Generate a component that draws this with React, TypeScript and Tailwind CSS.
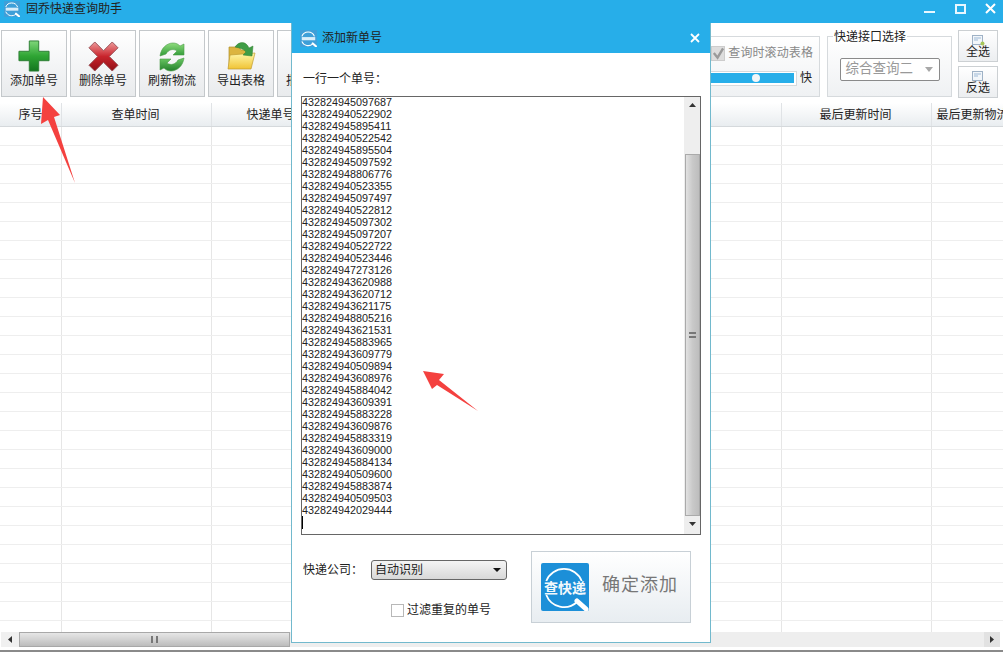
const numbers = `432824945097687
432824940522902
432824945895411
432824940522542
432824945895504
432824945097592
432824948806776
432824940523355
432824945097497
432824940522812
432824945097302
432824945097207
432824940522722
432824940523446
432824947273126
432824943620988
432824943620712
432824943621175
432824948805216
432824943621531
432824945883965
432824943609779
432824940509894
432824943608976
432824945884042
432824943609391
432824945883228
432824943609876
432824945883319
432824943609000
432824945884134
432824940509600
432824945883874
432824940509503
432824942029444`.split("\n");

function PlusIcon() {
  return (
    <svg width="32" height="32" viewBox="0 0 34 34">
      <defs>
        <linearGradient id="plusFill" x1="0" y1="0" x2="0" y2="1">
          <stop offset="0" stopColor="#7fd67a" />
          <stop offset="0.5" stopColor="#2fa534" />
          <stop offset="1" stopColor="#14761f" />
        </linearGradient>
      </defs>
      <path d="M12 1h10v11h11v10H22v11H12V22H1V12h11z" fill="url(#plusFill)" stroke="#2c7d33" strokeWidth="1" />
    </svg>
  );
}

function CrossIcon() {
  return (
    <svg width="31" height="31" viewBox="0 0 32 32">
      <defs>
        <linearGradient id="crossFill" x1="0" y1="0" x2="0" y2="1">
          <stop offset="0" stopColor="#ee9a9a" />
          <stop offset="0.5" stopColor="#c8242c" />
          <stop offset="1" stopColor="#8f0f16" />
        </linearGradient>
      </defs>
      <path d="M7 1l9 9 9-9 6 6-9 9 9 9-6 6-9-9-9 9-6-6 9-9-9-9z" fill="url(#crossFill)" stroke="#9a555a" strokeWidth="1" />
    </svg>
  );
}

function RefreshIcon() {
  return (
    <svg width="28" height="30" viewBox="0 0 28 30">
      <defs>
        <linearGradient id="refreshTop" x1="0" y1="0" x2="0" y2="1">
          <stop offset="0" stopColor="#8fdc7e" />
          <stop offset="1" stopColor="#2f9a36" />
        </linearGradient>
        <linearGradient id="refreshBottom" x1="0" y1="0" x2="0" y2="1">
          <stop offset="0" stopColor="#6cc964" />
          <stop offset="1" stopColor="#23802c" />
        </linearGradient>
      </defs>
      <path d="M2 14C3 6 9 1 15 1c3 0 5 1 7 3l4-2v11H15l4-4c-4-3-9-1-11 3z" fill="url(#refreshTop)" stroke="#4a9a47" strokeWidth="0.6" />
      <path d="M26 16c-1 8-7 13-13 13-3 0-5-1-7-3l-4 2V17h11l-4 4c4 3 9 1 11-3z" fill="url(#refreshBottom)" stroke="#4a9a47" strokeWidth="0.6" />
    </svg>
  );
}

function FolderIcon() {
  return (
    <svg width="30" height="30" viewBox="0 0 30 30" className="mb-px">
      <defs>
        <linearGradient id="folderFront" x1="0" y1="0" x2="0" y2="1">
          <stop offset="0" stopColor="#fff7a8" />
          <stop offset="1" stopColor="#f0c334" />
        </linearGradient>
      </defs>
      <path d="M3 6h10l2 3h9v18H3z" fill="#dcb540" stroke="#b08f2c" strokeWidth="0.7" />
      <path d="M4 14l25-2-4 16H2z" fill="url(#folderFront)" stroke="#c09c30" strokeWidth="0.7" />
      <path d="M9 6c4-6 11-6 14 1l4-2-1 10-9-1 3-3c-2-3-6-4-11-5z" fill="#3f9c46" stroke="#2f7f2c" strokeWidth="0.5" />
    </svg>
  );
}

function LogoMark({ size }: { size: number }) {
  const large = size > 30;
  return (
    <svg width={size} height={size} viewBox="0 0 48 48">
      <rect width="48" height="48" rx="2" fill={large ? "#1c8fd8" : "#3f9fd8"} />
      <path d="M5.3 18A19 19 0 0 1 40.7 18" fill="none" stroke="#fff" strokeWidth={large ? 1.8 : 3} />
      <path d="M5.3 32A19 19 0 0 0 36 39" fill="none" stroke="#fff" strokeWidth={large ? 1.8 : 3} />
      <path d="M36 38l9 8" stroke="#fff" strokeWidth={large ? 5 : 6} strokeLinecap="round" />
      {large ? (
        <text x="24" y="30" textAnchor="middle" fontSize="14" fontWeight="700" fill="#f2f8fc">
          查快递
        </text>
      ) : (
        <rect x="5" y="20" width="38" height="9" fill="#dbeefa" />
      )}
    </svg>
  );
}

function ToolButton({ label, icon }: { label: string; icon: React.ReactNode }) {
  return (
    <div className="flex h-[67px] w-[66px] flex-col items-center whitespace-nowrap border border-[#c4c8cb] bg-gradient-to-b from-white to-[#e9ebed]">
      <div className="flex h-[41px] shrink-0 items-end justify-center">{icon}</div>
      <span className="mt-[1px] leading-[16px]">{label}</span>
    </div>
  );
}

function SmallSelectButton({ label, accent }: { label: string; accent?: boolean }) {
  return (
    <div className="flex h-[32px] w-[40px] flex-col items-center border border-[#ccd0d3] bg-gradient-to-b from-white to-[#eceef0]">
      <svg width="13" height="11" viewBox="0 0 13 11" className="mt-[4px]">
        <rect x="0.5" y="0.5" width="10" height="9" fill="#f2f6fa" stroke="#9fb2c6" />
        <path d="M2 3h7M2 5h4" stroke="#9db9d6" />
        {accent ? <circle cx="10.5" cy="8.5" r="2" fill="#a6c65a" /> : null}
      </svg>
      <span className="mt-[-1px] leading-[15px]">{label}</span>
    </div>
  );
}

function TableRow({ header, cells }: { header?: boolean; cells: string[] }) {
  return (
    <div className={`grid grid-cols-[62px_150px_120px_450px_150px_84px] ${header ? "h-[24px] border-b border-[#d5d9dc] bg-gradient-to-b from-white to-[#e9edf0]" : "h-[19px] border-b border-[#eeeeee]"}`}>
      {cells.map((cell, i) => (
        <div key={i} className={`flex items-center justify-center whitespace-nowrap border-r ${i > 0 ? "pr-[2px]" : ""} ${header ? "border-[#e0e3e6]" : "border-[#e6e6e6]"}`}>
          {cell}
        </div>
      ))}
    </div>
  );
}

function AddDialog() {
  return (
    <div className="absolute left-[291px] top-[23px] flex h-[620px] w-[420px] flex-col border border-t-0 border-[#72b9cd] bg-white">
      <div className="flex h-[30px] shrink-0 items-center bg-[#27aee9] pl-[8px] pr-[10px]">
        <LogoMark size={17} />
        <span className="ml-[5px]">添加新单号</span>
        <svg width="10" height="10" viewBox="0 0 10 10" className="ml-auto">
          <path d="M1 1l8 8M9 1l-8 8" stroke="#fff" strokeWidth="1.8" />
        </svg>
      </div>
      <div className="flex flex-1 flex-col px-[9px]">
        <div className="ml-[2px] mt-[18px] h-[25px] leading-[16px]">一行一个单号：</div>
        <div className="flex h-[439px] border border-[#666666]">
          <div className="flex-1 overflow-hidden font-['Liberation_Sans',sans-serif] text-[10.8px] leading-[12px] text-[#222]">
            <div className="mt-[-1px]">
              {numbers.map((n) => (
                <div key={n}>{n}</div>
              ))}
              <div className="h-[13px] w-px bg-black" />
            </div>
          </div>
          <div className="flex w-[16px] flex-col items-center bg-[#eeeeee]">
            <svg width="7" height="4" viewBox="0 0 7 4" className="mt-[6px]"><path d="M3.5 0L7 4H0z" fill="#333" /></svg>
            <div className="mt-[47px] flex h-[362px] w-[15px] items-center justify-center border border-[#aaaaaa] bg-gradient-to-r from-[#e2e2e2] via-[#c9c9c9] to-[#bdbdbd]">
              <div className="h-[6px] w-[7px] border-y-2 border-[#777]" />
            </div>
            <svg width="7" height="4" viewBox="0 0 7 4" className="mt-[6px]"><path d="M0 0h7L3.5 4z" fill="#333" /></svg>
          </div>
        </div>
        <div className="mt-[16px] flex">
          <div className="w-[230px]">
            <div className="mt-[9px] flex items-center">
              <span className="ml-[2px] w-[68px]">快递公司：</span>
              <div className="flex h-[20px] w-[136px] items-center justify-between rounded-[3px] border border-[#666666] bg-gradient-to-b from-[#f4f4f4] to-[#d8d8d8] pl-[3px] pr-[5px]">
                <span>自动识别</span>
                <svg width="8" height="4" viewBox="0 0 8 4"><path d="M0 0h8L4 4z" fill="#111" /></svg>
              </div>
            </div>
            <div className="ml-[90px] mt-[21px] flex items-center">
              <div className="h-[13px] w-[13px] border border-[#b8b8b8] bg-white" />
              <span className="ml-[3px]">过滤重复的单号</span>
            </div>
          </div>
          <div className="flex h-[72px] w-[160px] items-center border border-[#c8d0d6] bg-gradient-to-b from-white to-[#e8edf1] pl-[9px]">
            <LogoMark size={48} />
            <span className="mb-[4px] ml-[13px] font-['Liberation_Serif','Noto_Sans_CJK_SC',serif] text-[18px] leading-none tracking-[1px] text-[#777777]">确定添加</span>
          </div>
        </div>
      </div>
    </div>
  );
}

export default function App() {
  return (
    <div className="relative flex h-[652px] w-[1003px] flex-col overflow-hidden bg-white font-['Liberation_Sans','Noto_Sans_CJK_SC',sans-serif] text-[12px] text-[#222]">
      <div className="flex h-[23px] shrink-0 items-center bg-[#27aee9] pb-[6px] pl-[4px]">
        <LogoMark size={16} />
        <span className="ml-[6px]">固乔快递查询助手</span>
        <div className="ml-auto flex items-center">
          <svg width="11" height="11" viewBox="0 0 11 11"><path d="M0 9h11" stroke="#e8f7ff" strokeWidth="2" /></svg>
          <svg width="11" height="10" viewBox="0 0 11 10" className="ml-[20px]"><rect x="1" y="1" width="9" height="8" fill="none" stroke="#e8f7ff" strokeWidth="2" /></svg>
          <svg width="11" height="11" viewBox="0 0 11 11" className="ml-[19px] mr-[7px]"><path d="M1 1l9 9M10 1l-9 9" stroke="#fff" strokeWidth="2" /></svg>
        </div>
      </div>

      <div className="flex h-[80px] shrink-0 pl-[1px] pt-[7px]">
        <div className="flex gap-[3px]">
          <ToolButton label="添加单号" icon={<PlusIcon />} />
          <ToolButton label="删除单号" icon={<CrossIcon />} />
          <ToolButton label="刷新物流" icon={<RefreshIcon />} />
          <ToolButton label="导出表格" icon={<FolderIcon />} />
          <ToolButton label="批量查询" icon={null} />
        </div>
        <div className="ml-auto flex pr-[5px]">
          <div className="mt-[6px] flex h-[61px] w-[180px] flex-col items-end border border-[#d6dadd] bg-gradient-to-b from-white to-[#eff1f3] pr-[6px]">
            <div className="mt-[7px] flex items-center text-[#888888]">
              <div className="mr-[3px] flex h-[15px] w-[14px] items-center justify-center border border-[#cccccc] bg-[#dddddd]">
                <svg width="13" height="13" viewBox="0 0 13 13"><path d="M2 6l4 5 6-10" fill="none" stroke="#9a9a9a" strokeWidth="2.6" /></svg>
              </div>
              <span className="tracking-[0.1px]">查询时滚动表格</span>
            </div>
            <div className="mt-[7px] flex items-center">
              <div className="flex h-[15px] w-[120px] items-center border border-[#d6dadd] bg-white pr-[2px]">
                <div className="relative h-[10px] flex-1 bg-[#27aee9]">
                  <div className="absolute left-[74px] top-[1px] h-[8px] w-[8px] rounded-full bg-[#f2f6f8]" />
                </div>
              </div>
              <span className="ml-[3px] mr-[1px]">快</span>
            </div>
          </div>
          <div className="relative ml-[7px] mt-[6px] flex h-[61px] w-[125px] items-center justify-center border border-[#d6dadd] bg-gradient-to-b from-white to-[#eff1f3]">
            <span className="absolute left-[5px] top-[-7px] bg-white px-[1px] leading-[14px]">快递接口选择</span>
            <div className="mt-[5px] flex h-[23px] w-[100px] items-center justify-between rounded-[2px] border border-[#8a8a8a] bg-white pl-[5px] pr-[6px] text-[13.5px] text-[#999999]">
              <span>综合查询二</span>
              <svg width="8" height="5" viewBox="0 0 8 5"><path d="M0 0h8L4 5z" fill="#a8a8a8" /></svg>
            </div>
          </div>
          <div className="ml-[6px] flex flex-col gap-[4px]">
            <SmallSelectButton label="全选" accent />
            <SmallSelectButton label="反选" />
          </div>
        </div>
      </div>

      <div className="flex-1 overflow-hidden">
        <TableRow header cells={["序号", "查单时间", "快递单号", "", "最后更新时间", "最后更新物流"]} />
        {Array.from({ length: 27 }, (_, i) => (
          <TableRow key={i} cells={["", "", "", "", "", ""]} />
        ))}
      </div>

      <div className="ml-[1px] mr-[3px] flex h-[15px] shrink-0 items-stretch bg-[#eeeeee]">
        <div className="flex w-[18px] items-center justify-center bg-[#f0f0f0]">
          <svg width="4" height="7" viewBox="0 0 4 7"><path d="M4 0v7L0 3.5z" fill="#333" /></svg>
        </div>
        <div className="flex w-[271px] items-center justify-center border border-[#a8a8a8] bg-gradient-to-b from-[#e6e6e6] via-[#d2d2d2] to-[#bcbcbc]">
          <div className="h-[7px] w-[7px] border-x-2 border-[#777]" />
        </div>
        <div className="ml-auto flex w-[16px] items-center justify-center bg-[#e2e2e2]">
          <svg width="4" height="7" viewBox="0 0 4 7"><path d="M0 0v7l4-3.5z" fill="#333" /></svg>
        </div>
      </div>
      <div className="h-[3px] shrink-0 bg-white" />
      <div className="h-[2px] shrink-0 bg-[#8a8a8a]" />

      <AddDialog />

      <svg width="40" height="90" viewBox="0 0 40 90" className="absolute left-[38px] top-[95px]">
        <path d="M5 2L22 20l-6 2 21 66L10 25l-7 4z" fill="#f4413f" />
      </svg>
      <svg width="60" height="45" viewBox="0 0 60 45" className="absolute left-[420px] top-[368px]">
        <path d="M3 3l21 3-5 6 39 31-41-26-5 4z" fill="#f4413f" />
      </svg>
    </div>
  );
}
